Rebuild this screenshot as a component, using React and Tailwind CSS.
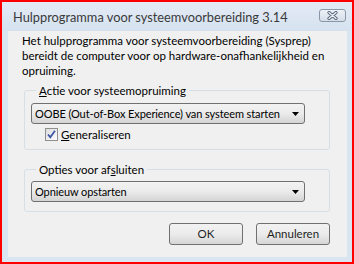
import React from "react";

function Combo({ text }) {
  return (
    <div className="flex items-center h-[21px] w-[274px] border border-[#707070] rounded-[3px] bg-gradient-to-b from-[#f2f2f2] via-[#ebebeb] to-[#d4d4d4] pl-[3px] pr-[5px]">
      <span className="flex-1 whitespace-nowrap overflow-hidden leading-[19px] text-[11px] tracking-[-0.1px]">{text}</span>
      <svg width="7" height="4" viewBox="0 0 7 4" className="shrink-0">
        <path d="M0 0 H7 L3.5 4 Z" fill="#000" />
      </svg>
    </div>
  );
}

function Btn({ children }) {
  return (
    <div className="flex items-center justify-center w-[74px] h-[22px] border border-[#707070] rounded-[3px] bg-gradient-to-b from-[#f2f2f2] via-[#ebebeb] to-[#d6d6d6] text-[#1e1e1e]">
      {children}
    </div>
  );
}

export default function App() {
  return (
    <div className="w-[354px] h-[264px] border-2 border-[#ff0000] bg-[#dae5f2] flex flex-col font-['Lato',sans-serif] text-[11.5px] text-black overflow-hidden">
      {/* Title bar */}
      <div className="h-[29px] shrink-0 flex items-center pl-[11px] pr-[6px] bg-gradient-to-b from-[#e3ebf5] to-[#d6e2f0]">
        <span className="flex-1 text-[#3a3a3a] text-[12.8px] leading-none pt-[1px]">
          Hulpprogramma voor systeemvoorbereiding 3.14
        </span>
        <div className="w-[27px] h-[13px] mb-[2px] border border-[#8a97a8] rounded-[3px] bg-gradient-to-b from-[#eef2f7] to-[#d5dde8] flex items-center justify-center">
          <svg width="13" height="9" viewBox="0 0 13 9">
            <path d="M3 1.5 L10 7.5 M10 1.5 L3 7.5" stroke="#56657a" strokeWidth="3.2" strokeLinecap="round" />
            <path d="M3 1.5 L10 7.5 M10 1.5 L3 7.5" stroke="#eef1f5" strokeWidth="1.4" strokeLinecap="round" />
          </svg>
        </div>
      </div>
      {/* Content */}
      <div className="flex-1 flex flex-col ml-[6px] mr-[5px] mb-[5px] bg-[#f0f0f0] pt-[2px]">
        <p className="pl-[14px] pr-[8px] leading-[15px] whitespace-nowrap">
          Het hulpprogramma voor systeemvoorbereiding (Sysprep)
          <br />
          bereidt de computer voor op hardware-onafhankelijkheid en
          <br />
          opruiming.
        </p>
        <fieldset className="mt-[5px] ml-[16px] mr-[17px] border border-[#d5dfe5] rounded-[3px] pl-[6px] pb-[7px]">
          <legend className="ml-[5px] px-[3px] leading-[15px]">
            <span className="underline">A</span>ctie voor systeemopruiming
          </legend>
          <div className="mt-[5px]">
            <Combo text="OOBE (Out-of-Box Experience) van systeem starten" />
          </div>
          <div className="flex items-center mt-[3px] ml-[14px] h-[15px]">
            <div className="w-[13px] h-[13px] border border-[#8e8f8f] bg-gradient-to-br from-[#dcdcdc] to-[#ffffff] flex items-center justify-center">
              <svg width="11" height="11" viewBox="0 0 11 11">
                <path d="M2 5.5 L4.3 8.2 L9 1.8" stroke="#3d59a5" strokeWidth="1.8" fill="none" />
              </svg>
            </div>
            <span className="ml-[3px] leading-[15px]">
              <span className="underline">G</span>eneraliseren
            </span>
          </div>
        </fieldset>
        <fieldset className="mt-[12px] ml-[16px] mr-[17px] border border-[#d5dfe5] rounded-[3px] pl-[6px] pb-[9px]">
          <legend className="ml-[5px] px-[3px] leading-[15px]">
            Opties voor af<span className="underline">s</span>luiten
          </legend>
          <div className="mt-[4px]">
            <Combo text="Opnieuw opstarten" />
          </div>
        </fieldset>
        <div className="flex justify-end gap-[13px] mt-[11px] mr-[17px]">
          <Btn>OK</Btn>
          <Btn>Annuleren</Btn>
        </div>
      </div>
    </div>
  );
}
